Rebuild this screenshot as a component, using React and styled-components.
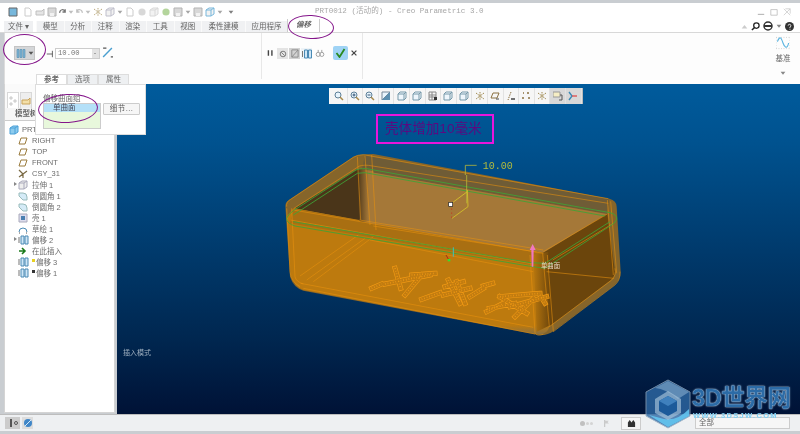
import React from "react"
import styled, { createGlobalStyle } from "styled-components"

const cjk = `"Liberation Sans", "Noto Sans CJK SC", sans-serif`

const GlobalStyle = createGlobalStyle`
html, body {
    margin: 0;
    width: 800px;
    height: 434px;
    overflow: hidden;
    background: #c9cdd1;
    font-family: ${cjk};
}
`

const Win = styled.div`
    position: relative;
    width: 800px;
    height: 434px;
    padding: 3px 0 3px 0;
    box-sizing: border-box;
    display: flex;
    flex-direction: column;
    background: #c9cdd1;
    overflow: hidden;
    filter: blur(0.3px);
`
const TitleBar = styled.div`
    height: 17px;
    padding: 0 4px;
    background: #fff;
    position: relative;
    display: flex;
    align-items: center;
`
const QuickIcon = styled.span`
    display: flex;
    width: ${p => p.$w || 12}px;
    height: 12px;
    align-items: center;
    justify-content: center;
    opacity: 0.75;
`
const Title = styled.div`
    position: absolute;
    left: 315px;
    top: 3px;
    font: 7.6px/11px "Liberation Mono", "Noto Sans CJK SC", monospace;
    color: #a8a8a8;
    white-space: pre;
`
const WinBtns = styled.div`
    margin-left: auto;
    display: flex;
    gap: 5px;
    padding-right: 5px;
`
const TabRow = styled.div`
    height: 13px;
    padding: 0 3px 0 4px;
    background: #fff;
    border-bottom: 1px solid #d8d8d8;
    box-sizing: border-box;
    display: flex;
    align-items: flex-end;
    position: relative;
`
const FileTab = styled.div`
    width: 29px;
    height: 11px;
    margin-right: 3px;
    background: #eff0f2;
    font-size: 7.5px;
    line-height: 11px;
    color: #666;
    text-align: center;
`
const Tab = styled.div`
    width: ${p => p.$w}px;
    height: ${p => (p.$on ? 13 : 11)}px;
    box-sizing: border-box;
    font-size: 7.5px;
    line-height: 11px;
    text-align: center;
    color: #666;
    background: ${p => (p.$on ? "#fff" : "#f0f1f3")};
    border-left: 1px solid ${p => (p.$on ? "#ccc" : "#fafafa")};
    border-right: ${p => (p.$on ? "1px solid #ccc" : "none")};
    font-weight: ${p => (p.$on ? "bold" : "normal")};
    font-style: ${p => (p.$on ? "italic" : "normal")};
`
const HelpBtns = styled.div`
    margin-left: auto;
    display: flex;
    align-items: center;
    gap: 3px;
    padding: 0 3px 1px 0;
`
const Ribbon = styled.div`
    height: 51px;
    margin-left: 4px;
    background: #fdfdfd;
    border-left: 1px solid #ddd;
    display: flex;
`
const Group = styled.div`
    width: ${p => p.$w}px;
    height: 46px;
    box-sizing: border-box;
    padding: ${p => p.$pad || "13px 0 0 9px"};
    border-right: 1px solid #e8e8e8;
    display: flex;
    align-items: flex-start;
    gap: ${p => p.$gap || 0}px;
`
const TypeButton = styled.div`
    width: 21px;
    height: 14px;
    background: #d4d6d8;
    border: 1px solid #c4c4c4;
    box-sizing: border-box;
    display: flex;
    align-items: center;
    justify-content: center;
    gap: 2px;
`
const DimMark = styled.span`
    width: 20px;
    height: 10px;
    margin-top: 3px;
    padding-right: 1px;
    box-sizing: border-box;
    display: flex;
    align-items: center;
    justify-content: flex-end;
`
const ValueBox = styled.div`
    width: 45px;
    height: 11px;
    margin-top: 2px;
    box-sizing: border-box;
    background: #fff;
    border: 1px solid #ccc;
    font: 7.2px/9px "Liberation Mono", monospace;
    color: #777;
    padding-left: 2px;
    position: relative;
`
const Spin = styled.span`
    position: absolute;
    right: 0;
    top: 0;
    width: 7px;
    height: 9px;
    background: #e3e3e3;
    &::after {
        content: "";
        position: absolute;
        left: 2px;
        top: 4px;
        border: 1.5px solid transparent;
        border-top-color: #666;
    }
`
const ToolIcon = styled.span`
    display: flex;
    align-items: center;
    justify-content: center;
    width: ${p => p.$w || 11}px;
    height: ${p => p.$h || 11}px;
    margin-top: ${p => p.$top ?? 2}px;
    background: ${p => p.$bg || "transparent"};
`
const OkButton = styled.div`
    width: 15px;
    height: 14px;
    margin-left: 6px;
    border-radius: 2px;
    background: #9fd3f5;
    display: flex;
    align-items: center;
    justify-content: center;
`
const DatumGroup = styled.div`
    margin-left: auto;
    width: 34px;
    height: 46px;
    padding-top: 3px;
    box-sizing: border-box;
    display: flex;
    flex-direction: column;
    align-items: center;
    font-size: 7.5px;
    line-height: 10px;
    color: #666;
`
const DatumLabel = styled.span`
    margin-top: ${p => p.$gap}px;
    display: flex;
`
const Main = styled.div`
    flex: 1;
    min-height: 0;
    display: flex;
    position: relative;
    background: #c9cdd1;
`
const Side = styled.div`
    width: 111px;
    margin-left: 4px;
    margin-right: 2px;
    margin-bottom: 1px;
    background: #fff;
    border: 1px solid #d4d4d4;
    border-top: none;
    box-sizing: border-box;
    display: flex;
    flex-direction: column;
`
const SideTabs = styled.div`
    height: 24px;
    padding: 8px 0 0 2px;
    background: #fafafa;
    box-sizing: border-box;
    display: flex;
    gap: 1px;
`
const SideTab = styled.div`
    width: 12px;
    height: 16px;
    border: 1px solid #d8d8d8;
    border-bottom: none;
    box-sizing: border-box;
    display: flex;
    align-items: center;
    justify-content: center;
    background: ${p => (p.$on ? "#fff" : "#eee")};
`
const TreeHead = styled.div`
    height: 12px;
    padding-left: 10px;
    background: #f6f6f6;
    border-bottom: 1px solid #ccc;
    font-size: 7.5px;
    font-weight: bold;
    line-height: 11px;
    color: #666;
`
const Tree = styled.div`
    padding-top: 3px;
    display: flex;
    flex-direction: column;
`
const TreeRow = styled.div`
    height: 11px;
    display: flex;
    align-items: center;
    padding-left: 9px;
    font-size: 7.5px;
    color: #6c6c6c;
    white-space: pre;
`
const Twist = styled.span`
    width: 5px;
    height: 7px;
    position: relative;
    &::after {
        content: "";
        display: ${p => (p.$show ? "block" : "none")};
        position: absolute;
        left: 0;
        top: 1px;
        border: 2.5px solid transparent;
        border-left: 3px solid #888;
    }
`
const TreeIcon = styled.span`
    width: 12px;
    height: 10px;
    margin-right: ${p => (p.$root ? 2 : 3)}px;
    margin-left: ${p => (p.$root ? -11 : -2)}px;
    display: flex;
    align-items: center;
    justify-content: center;
`
const TreeMark = styled.span`
    width: 3px;
    height: 3px;
    margin: 0 1px 2px 0;
    background: ${p => p.$c};
`
const Canvas = styled.div`
    flex: 1;
    position: relative;
    background: linear-gradient(180deg, #005b9c 0%, #00528f 18%, #00264f 78%, #001236 100%);
`
const ViewBar = styled.div`
    position: absolute;
    left: 212px;
    top: 4px;
    height: 16px;
    width: 254px;
    padding-left: 3px;
    box-sizing: border-box;
    display: flex;
    background: #f6f6f6;
    border-right: 1px solid #bbb;
`
const ViewBtn = styled.span`
    width: 15.6px;
    height: 16px;
    display: flex;
    align-items: center;
    justify-content: center;
    background: ${p => (p.$on ? "#d8d8d8" : "transparent")};
    border-right: 1px solid #e2e2e2;
    box-sizing: border-box;
`
const Note = styled.div`
    position: absolute;
    left: 259px;
    top: 30px;
    width: 118px;
    height: 30px;
    box-sizing: border-box;
    border: 2px solid #e815dc;
    padding-left: 7px;
    font-size: 13.6px;
    line-height: 25px;
    color: #5a0a80;
    white-space: nowrap;
`
const Mode = styled.div`
    position: absolute;
    left: 6px;
    bottom: 57px;
    font-size: 7px;
    color: #9fb0c0;
`
const ModelSvg = styled.svg`
    position: absolute;
    left: 153px;
    top: 56px;
    width: 360px;
    height: 210px;
`
const Status = styled.div`
    height: 17px;
    padding-left: 5px;
    background: #eef0f2;
    border-top: 1px solid #bdbdbd;
    box-sizing: border-box;
    display: flex;
    align-items: center;
    gap: 2px;
    position: relative;
`
const StatusRight = styled.div`
    margin-left: auto;
    display: flex;
    align-items: center;
    padding-right: 10px;
`
const DotTrack = styled.div`
    display: flex;
    gap: 1px;
    align-items: center;
    margin-right: 11px;
`
const Dot = styled.span`
    width: ${p => p.$s}px;
    height: ${p => p.$s}px;
    border-radius: 50%;
    background: ${p => p.$c};
`
const FindBtn = styled.div`
    width: 20px;
    height: 13px;
    margin: 0 54px 0 10px;
    background: #f6f6f6;
    border: 1px solid #ccc;
    box-sizing: border-box;
    display: flex;
    align-items: center;
    justify-content: center;
`
const FilterBox = styled.div`
    width: 95px;
    height: 12px;
    box-sizing: border-box;
    padding: 1px 0 0 3px;
    background: #f6f6f6;
    border: 1px solid #ccc;
    font-size: 7.5px;
    line-height: 8px;
    color: #666;
`
const Popup = styled.div`
    position: absolute;
    left: 35px;
    top: 74px;
    width: 111px;
`
const PopTabs = styled.div`
    height: 10px;
    padding-left: 1px;
    display: flex;
`
const PopTab = styled.div`
    width: 31px;
    height: 11px;
    box-sizing: border-box;
    background: ${p => (p.$on ? "#fff" : "#eef0f2")};
    border: 1px solid #ddd;
    border-bottom: none;
    font-size: 7.5px;
    line-height: 10px;
    text-align: center;
    color: #666;
    font-weight: ${p => (p.$on ? "bold" : "normal")};
    position: relative;
`
const PopBody = styled.div`
    height: 51px;
    box-sizing: border-box;
    padding: 12px 0 0 7px;
    background: #fff;
    border: 1px solid #ddd;
    display: flex;
    gap: 2px;
    position: relative;
`
const PopLabel = styled.div`
    position: absolute;
    left: 7px;
    top: 10px;
    font-size: 7.5px;
    line-height: 8px;
    color: #666;
`
const SurfList = styled.div`
    width: 58px;
    height: 26px;
    margin-top: 6px;
    box-sizing: border-box;
    background: #e8f8dc;
    border: 1px solid #ccc;
`
const SurfItem = styled.div`
    height: 8px;
    background: #b4e0f8;
    padding-left: 9px;
    font-size: 7.5px;
    line-height: 8px;
    color: #445;
`
const DetailBtn = styled.div`
    width: 37px;
    height: 12px;
    margin-top: 6px;
    box-sizing: border-box;
    background: #f6f6f6;
    border: 1px solid #ccc;
    border-radius: 1px;
    font-size: 7.5px;
    line-height: 10px;
    letter-spacing: 0.4px;
    text-align: center;
    color: #555;
`
const Ring = styled.div`
    position: absolute;
    left: ${p => p.$x}px;
    top: ${p => p.$y}px;
    width: ${p => p.$w}px;
    height: ${p => p.$h}px;
    box-sizing: border-box;
    border: 1.5px solid #84148a;
    border-radius: 50%;
    transform: rotate(${p => p.$r || 0}deg);
    pointer-events: none;
`
const Mark = styled.div`
    position: absolute;
    left: 644px;
    top: 379px;
    width: 156px;
    height: 50px;
    pointer-events: none;
`
const MarkHex = styled.svg`
    position: absolute;
    left: 0;
    top: 0;
    width: 48px;
    height: 50px;
`
const MarkName = styled.div`
    position: absolute;
    left: 48px;
    top: 6px;
    font: bold 23.5px/27px ${cjk};
    color: #2c6ba6;
    letter-spacing: -0.4px;
    white-space: nowrap;
    text-shadow: 0 0 1px #cfe4f5, 0 0 2px #a8c8e4;
`
const MarkUrl = styled.div`
    position: absolute;
    left: 49px;
    top: 34px;
    font: bold 7.5px/6px "Liberation Sans", sans-serif;
    color: #7fd0f5;
    letter-spacing: 1.3px;
    white-space: nowrap;
`

/* little drawings */
const Svg = ({ w = 10, h = 10, children }) => (
    <svg width={w} height={h} viewBox="0 0 10 10" fill="none">{children}</svg>
)
const Sheet = () => <Svg><path d="M2 1h4l2 2v6H2z" fill="#fff" stroke="#bbb" /></Svg>
const Folder = ({ c = "#ddd", s = "#aaa" }) => <Svg><path d="M1 4h6l2-2v6H1z" fill={c} stroke={s} /></Svg>
const Disk = () => <Svg><path d="M1 1h8v8H1z" fill="#ccc" stroke="#999" /><path d="M3 6h4v3H3z" fill="#eee" /></Svg>
const Arrow = ({ c = "#444", flip }) => (
    <Svg><path d={flip ? "M8 6a3 3 0 0 0-6-1M2 2v3h3" : "M2 6a3 3 0 0 1 6-1M8 2v3H5"} stroke={c} strokeWidth="1.4" /></Svg>
)
const Caret = ({ c = "#888" }) => <Svg w={6} h={6}><path d="M1 3h8L5 8z" fill={c} /></Svg>
const Dots = ({ c = "#aaa" }) => <Svg><path d="M2 1h2v2H2zM2 7h2v2H2zM6 4h2v2H6z" stroke={c} strokeWidth=".6" /></Svg>
const Ball = ({ c }) => <Svg><circle cx="5" cy="5" r="3.6" fill={c} /></Svg>
const Cube = ({ c = "#aab" }) => <Svg><path d="M1 3l3-2h5v6l-3 2H1z" fill="#eee" stroke={c} /><path d="M1 3h5v6M6 3l3-2" stroke={c} /></Svg>
const RootCube = () => <Svg><path d="M1 3l3-2h5v6l-3 2H1z" fill="#8ccbee" stroke="#4aa0d8" /><path d="M1 3h5v6M6 3l3-2" stroke="#4aa0d8" /></Svg>
const Offset = ({ c = "#4a8ab5" }) => (
    <Svg w={12} h={10}><path d="M3 1h3v8H3zM7 1h3v8H7z" fill="#cfe6f6" stroke={c} /><path d="M1 2v6" stroke="#777" /></Svg>
)
const Plane = () => <Svg><path d="M3 2h6L7 8H1z" stroke="#9a7b3c" fill="#fff" /></Svg>
const Csys = () => <Svg><path d="M5 5L1 1M5 5l4-3M5 5v4M5 5L1 8" stroke="#7a6a44" strokeWidth="1.2" /></Svg>
const Round = () => <Svg><path d="M1 2h4a4 4 0 0 1 4 4v3H5L1 5z" fill="#d5ebf7" stroke="#9bb" /></Svg>
const Shell = () => <Svg><path d="M1 1h8v8H1z" fill="#dde" stroke="#aab" /><path d="M3 3h4v4H3z" fill="#4a7fb0" /></Svg>
const Sketch = () => <Svg><path d="M1 8a4 4 0 0 1 8 0" stroke="#4a8ab5" /><path d="M1 9h1M8 9h1" stroke="#555" /></Svg>
const Insert = () => <Svg><path d="M1 5h5M4 2l3 3-3 3" stroke="#1a7a1a" strokeWidth="1.6" /></Svg>
const Lens = ({ mode }) => (
    <Svg>
        <circle cx="4" cy="4" r="3" fill="#e8f4fc" stroke="#5c7f98" />
        <path d="M6 6l3 3" stroke="#a88a4c" strokeWidth="1.5" />
        {mode && <path d={mode === "in" ? "M2.5 4h3M4 2.5v3" : "M2.5 4h3"} stroke="#357" />}
    </Svg>
)
const Tilt = () => <Svg><path d="M1 9V1h8z" fill="#e8f4fc" stroke="#789" /><path d="M9 1v8H1z" fill="#5b8fb0" /></Svg>
const Box3 = () => <Svg><path d="M1 3h6v6H1zM1 3l2-2h6L7 3M9 1v6L7 9" fill="#eef6fc" stroke="#79a" /></Svg>
const Grid = () => <Svg><path d="M1 1h7v8H1zM1 4h7M1 6h7M4 1v8" stroke="#888" /><path d="M6 6h3v3H6z" fill="#333" /></Svg>
const Star = () => <Svg><path d="M5 1v8M1 2l8 6M9 2L1 8" stroke="#a08a50" strokeDasharray="1.4 .7" /></Svg>
const Para = () => <Svg><path d="M3 2h6L7 7H1z" stroke="#8a7040" /><path d="M6 8h3" stroke="#444" /></Svg>
const Slash = () => <Svg><path d="M5 1L2 9" stroke="#8a7040" strokeDasharray="1.5 1" /><path d="M5 8h4" stroke="#444" strokeWidth="1.5" /></Svg>
const Pts = () => <Svg><path d="M1 7h2M6 2h2M2 2h1M7 7h2" stroke="#8a7040" strokeWidth="1.4" /></Svg>
const Note3 = () => <Svg><path d="M0 1h7v5H0z" fill="#f5edc4" stroke="#999" /><path d="M7 4h2v5H6" stroke="#555" /></Svg>
const Link = () => <Svg><path d="M1 1l3 4-3 4" stroke="#3a8ab5" strokeWidth="1.4" /><path d="M4 5h5" stroke="#d55" strokeWidth="1.4" /></Svg>

const tabs = [
    ["模型", 27.5], ["分析", 27.5], ["注释", 27.5], ["渲染", 27.5], ["工具", 27.5],
    ["视图", 27.5], ["柔性建模", 44], ["应用程序", 42],
]

const treeRows = [
    { t: "PRT", I: RootCube, root: true },
    { t: "RIGHT", I: Plane },
    { t: "TOP", I: Plane },
    { t: "FRONT", I: Plane },
    { t: "CSY_31", I: Csys },
    { t: "拉伸 1", I: Cube, open: true },
    { t: "倒圆角 1", I: Round },
    { t: "倒圆角 2", I: Round },
    { t: "壳 1", I: Shell },
    { t: "草绘 1", I: Sketch },
    { t: "偏移 2", I: Offset, open: true },
    { t: "在此插入", I: Insert },
    { t: "偏移 3", I: Offset, pre: "#e8d020" },
    { t: "偏移 1", I: Offset, pre: "#333" },
]

const viewIcons = [
    () => <Lens />, () => <Lens mode="in" />, () => <Lens mode="out" />, Tilt, Box3, Box3, Grid, Box3, Box3,
    Star, Para, Slash, Pts, Star, Note3, Link,
]

// all model coordinates are 3x page pixels, counted from (270,140)
const wire = [
    "M50 200Q48 185 62 178L250 52Q262 44 280 44L1015 176",
    "M72 205L262 82Q270 74 295 76L1015 190",
    "M262 50L272 240M285 48L300 255M305 45L318 270",
    "M50 205L60 395Q62 425 90 440M65 205L75 410Q78 425 100 432",
    "M70 210L820 340M62 240L790 372",
    "M268 240L820 330M310 258L800 336",
    "M92 430L790 562M100 445L795 582",
    "M90 408L265 285M110 420L285 295M130 425L310 290",
    "M780 345L795 578Q800 590 820 583M818 340L838 560M832 345L850 575",
    "M820 335L1012 222M848 360L1030 250",
    "M838 560L1025 420Q1040 405 1035 385M850 575L1035 435Q1052 420 1050 395",
    "M1012 180L1030 405M1022 184L1040 400",
    "M830 395L1032 415M300 300L790 395",
]
const green = "M50 235Q52 225 70 212L255 92Q265 85 290 86L1020 218Q1042 224 1040 238Q1036 250 1020 258L825 385L775 378L75 258Q50 250 50 235ZM70 225L262 100L285 98L1005 228M70 245L780 368L825 370L1020 245"

// bars of the raised lettering on the box floor
const bars = [
    [305, 445, 335, 432], [345, 432, 480, 405], [375, 385, 392, 445], [405, 465, 455, 405], [425, 405, 495, 400],
    [400, 420, 440, 412], [455, 478, 510, 458], [525, 440, 580, 425], [535, 420, 570, 490], [560, 425, 585, 490],
    [600, 470, 640, 445], [640, 438, 668, 430], [520, 465, 600, 445], [658, 505, 735, 490], [690, 470, 810, 460],
    [735, 530, 790, 475], [690, 470, 770, 520], [720, 500, 830, 470], [650, 515, 700, 490], [810, 465, 825, 490],
]

function Lettering() {
    const d = bars.map(([a, b, c, e]) => `M${a} ${b}L${c} ${e}`).join("")
    return (
        <g fill="none" strokeLinecap="square">
            <path d={d} stroke="#f29a14" strokeWidth="15" />
            <path d={d} stroke="#c27c10" strokeWidth="11" />
            <path d={d} stroke="#f29a14" strokeWidth="5" strokeDasharray="2 6" strokeLinecap="butt" />
        </g>
    )
}

function Model() {
    return (
        <ModelSvg viewBox="0 0 1080 630">
            <defs>
                <linearGradient id="col" x1="0" x2="1" y1="0" y2="0">
                    <stop offset="0" stopColor="#4a3519" />
                    <stop offset="0.6" stopColor="#a57838" />
                    <stop offset="1" stopColor="#a57838" />
                </linearGradient>
                <linearGradient id="edge" x1="0" x2="1" y1="0" y2="0">
                    <stop offset="0" stopColor="#b8770e" />
                    <stop offset="1" stopColor="#6b450c" />
                </linearGradient>
                <linearGradient id="rim" x1="0" x2="0" y1="0" y2="1">
                    <stop offset="0" stopColor="#bd7a0e" />
                    <stop offset="0.93" stopColor="#bd7a0e" />
                    <stop offset="1" stopColor="#8a7040" />
                </linearGradient>
            </defs>
            <path d="M46 198Q46 186 60 178L250 50Q265 42 310 42L1018 176Q1040 182 1040 200L1052 395Q1052 420 1030 438L852 572Q825 592 790 582L100 452Q70 442 60 410Z" fill="#86652a" />
            <path d="M75 205L262 88L300 90L318 270L262 240Z" fill="#4a3519" />
            <path d="M70 205L820 338L838 560Q830 590 790 580L100 450Q72 440 62 405L50 230Z" fill="url(#rim)" />
            <path d="M285 46L1018 178L1010 222L275 92Z" fill="#6f5c36" />
            <path d="M280 92L1010 222L820 338L318 258L300 100Z" fill="#a57838" />
            <path d="M262 88L310 92L318 270L285 285L268 240Z" fill="url(#col)" />
            <path d="M70 205L300 250L820 338L800 378L60 250Z" fill="#a96f12" />
            <path d="M820 338L1012 222L1035 395Q1035 410 1020 422L840 558Z" fill="#6b450c" />
            <path d="M790 345L835 335L842 555L800 575Z" fill="url(#edge)" />
            <path d={wire.join("")} fill="none" stroke="#e8920f" strokeWidth="2" opacity=".85" />
            <path d={green} fill="none" stroke="#3fa336" strokeWidth="2.6" />
            <Lettering />
            <path d="M620 76H586V105M590 105V190" stroke="#b8b838" strokeWidth="2.4" fill="none" />
            <path d="M592 150L594 200L546 235M592 155L542 192" stroke="#d8c828" strokeWidth="2.4" fill="none" />
            <path d="M545 205V236" stroke="#c04020" strokeWidth="2.4" strokeDasharray="5 7" />
            <rect x="536" y="187" width="12" height="12" fill="#fff" stroke="#222" strokeWidth="2" />
            <text x="638" y="86" fontFamily="Liberation Mono, monospace" fontSize="30" fill="#b4bc3c">10.00</text>
            <path d="M788 312l9 18h-6l-1 50h-5l-1-50h-5z" fill="#f078c0" />
            <text x="813" y="385" fontFamily={cjk} fontSize="19" fill="#e8dcc8">单曲面</text>
            <path d="M550 322v28" stroke="#40c0c0" strokeWidth="3" />
            <path d="M528 345l8 14" stroke="#b02818" strokeWidth="3" />
            <rect x="533" y="357" width="8" height="7" fill="#30e030" />
        </ModelSvg>
    )
}

export default function App() {
    return (
        <>
            <GlobalStyle />
            <Win>
                <TitleBar>
                    <QuickIcon $w={18}><Svg><path d="M1 1h8v8H1z" fill="#4a9fd0" stroke="#333" /></Svg></QuickIcon>
                    <QuickIcon><Sheet /></QuickIcon>
                    <QuickIcon><Folder /></QuickIcon>
                    <QuickIcon><Disk /></QuickIcon>
                    <QuickIcon $w={9}><Arrow /></QuickIcon>
                    <QuickIcon $w={8}><Caret c="#aaa" /></QuickIcon>
                    <QuickIcon $w={9}><Arrow c="#aaa" flip /></QuickIcon>
                    <QuickIcon $w={8}><Caret c="#aaa" /></QuickIcon>
                    <QuickIcon><Star /></QuickIcon>
                    <QuickIcon><Cube /></QuickIcon>
                    <QuickIcon $w={8}><Caret /></QuickIcon>
                    <QuickIcon><Sheet /></QuickIcon>
                    <QuickIcon><Ball c="#ccc" /></QuickIcon>
                    <QuickIcon><Cube c="#ccc" /></QuickIcon>
                    <QuickIcon><Ball c="#9cc77c" /></QuickIcon>
                    <QuickIcon><Disk /></QuickIcon>
                    <QuickIcon $w={8}><Caret /></QuickIcon>
                    <QuickIcon><Disk /></QuickIcon>
                    <QuickIcon><Cube c="#4a9fd0" /></QuickIcon>
                    <QuickIcon $w={8}><Caret /></QuickIcon>
                    <QuickIcon $w={14}><Caret c="#555" /></QuickIcon>
                    <Title>PRT0012 (活动的) - Creo Parametric 3.0</Title>
                    <WinBtns>
                        <Svg w={8} h={8}><path d="M1 8h8" stroke="#bbb" strokeWidth="1.5" /></Svg>
                        <Svg w={8} h={8}><path d="M1 2h8v7H1z" stroke="#bbb" /></Svg>
                        <Svg w={8} h={8}><path d="M1 1l8 8M9 1L1 9M3 1h6v6" stroke="#ccc" /></Svg>
                    </WinBtns>
                </TitleBar>
                <TabRow>
                    <FileTab>文件 ▾</FileTab>
                    {tabs.map(([t, w]) => <Tab key={t} $w={w}>{t}</Tab>)}
                    <Tab $w={33} $on>偏移</Tab>
                    <HelpBtns>
                        <Svg w={7} h={7}><path d="M1 8l4-5 4 5z" fill="#ccc" /></Svg>
                        <Svg w={9} h={9}><circle cx="6" cy="4" r="3" stroke="#222" strokeWidth="1.4" /><path d="M4 6L1 9" stroke="#222" strokeWidth="1.6" /></Svg>
                        <Svg w={10} h={10}><circle cx="5" cy="5" r="4" stroke="#333" strokeWidth="1.5" /><path d="M1 5h8" stroke="#333" strokeWidth="2" /></Svg>
                        <Caret />
                        <Svg w={9} h={9}><circle cx="5" cy="5" r="5" fill="#333" /><path d="M3.5 4a1.5 1.5 0 1 1 2 1.5V6.500M5.500 7.500v1" stroke="#fff" /></Svg>
                    </HelpBtns>
                </TabRow>
                <Ribbon>
                    <Group $w={257}>
                        <TypeButton>
                            <Svg w={10} h={11}><path d="M1 1h2v8H1zM4 1h2v8H4zM7 1h2v8H7z" fill="#7fb6d6" stroke="#4f8aad" strokeWidth=".6" /></Svg>
                            <Caret c="#555" />
                        </TypeButton>
                        <DimMark>
                            <Svg w={8} h={8}><path d="M1 5h7M8 1v8" stroke="#444" /></Svg>
                        </DimMark>
                        <ValueBox>10.00<Spin /></ValueBox>
                        <ToolIcon $w={15} $h={13} $top={0}>
                            <Svg w={11} h={11}><path d="M1 9l8-8" stroke="#4a9fd0" strokeWidth="1.3" /><path d="M1 1h3M8 9h2" stroke="#555" strokeWidth="1.3" /></Svg>
                        </ToolIcon>
                    </Group>
                    <Group $w={101} $pad="13px 0 0 3px" $gap={1}>
                        <ToolIcon $w={11} $h={12} $top={1}><Svg w={7} h={8}><path d="M2 1v8M7 1v8" stroke="#444" strokeWidth="2" /></Svg></ToolIcon>
                        <ToolIcon $bg="#e4e4e4"><Svg w={8} h={8}><circle cx="5" cy="5" r="3.5" stroke="#666" /><path d="M3 3l4 4" stroke="#666" /></Svg></ToolIcon>
                        <ToolIcon $bg="#d2d2d2"><Svg w={9} h={9}><path d="M2 1h7v8H2zM2 9l7-8" stroke="#888" /></Svg></ToolIcon>
                        <ToolIcon $bg="#eef4f8"><Offset /></ToolIcon>
                        <ToolIcon $w={13}><Svg w={12} h={9}><circle cx="3" cy="6" r="2.3" stroke="#999" /><circle cx="7" cy="6" r="2.3" stroke="#999" /><path d="M3 4V1M7 4V1" stroke="#999" /></Svg></ToolIcon>
                        <OkButton><Svg w={11} h={10}><path d="M1 5l3 4 5-8" stroke="#2a8a20" strokeWidth="1.8" /></Svg></OkButton>
                        <ToolIcon $w={9} $h={12} $top={1}><Svg w={6} h={6}><path d="M1 1l8 8M9 1L1 9" stroke="#444" strokeWidth="2" /></Svg></ToolIcon>
                    </Group>
                    <DatumGroup>
                        <Svg w={14} h={14}>
                            <path d="M0 1h10M0 9h10M0 1v8M10 1v8" stroke="#bbb" strokeWidth=".5" strokeDasharray=".6 1.2" />
                            <path d="M1 4c2-5 3-2 4 1s3 5 4 0" stroke="#5ab4e0" strokeWidth=".8" />
                        </Svg>
                        <DatumLabel $gap={4}>基准</DatumLabel>
                        <DatumLabel $gap={6}><Caret /></DatumLabel>
                    </DatumGroup>
                </Ribbon>
                <Main>
                    <Side>
                        <SideTabs>
                            <SideTab $on><Dots /></SideTab>
                            <SideTab><Folder c="#f3dfa8" s="#c9a35a" /></SideTab>
                        </SideTabs>
                        <TreeHead>模型树</TreeHead>
                        <Tree>
                            {treeRows.map(r => (
                                <TreeRow key={r.t}>
                                    <Twist $show={r.open} />
                                    <TreeIcon $root={r.root}><r.I /></TreeIcon>
                                    {r.pre && <TreeMark $c={r.pre} />}
                                    {r.t}
                                </TreeRow>
                            ))}
                        </Tree>
                    </Side>
                    <Canvas>
                        <ViewBar>
                            {viewIcons.map((I, i) => (
                                <ViewBtn key={i} $on={i >= 14}><I /></ViewBtn>
                            ))}
                        </ViewBar>
                        <Note>壳体增加10毫米</Note>
                        <Model />
                        <Mode>插入模式</Mode>
                    </Canvas>
                </Main>
                <Status>
                    <ToolIcon $w={15} $h={12} $top={0} $bg="#ccc"><Svg w={10} h={10}><path d="M3 1v8" stroke="#555" strokeWidth="2" /><circle cx="8" cy="5" r="1.500" stroke="#555" /></Svg></ToolIcon>
                    <ToolIcon $w={11} $h={12} $top={0} $bg="#ddd"><Svg><circle cx="5" cy="5" r="4" fill="#3f86c8" /><path d="M2 8l6-6" stroke="#d8eaf8" /></Svg></ToolIcon>
                    <StatusRight>
                        <DotTrack>
                            <Dot $s={5} $c="#c0c0c0" />
                            <Dot $s={3} $c="#d4d4d4" />
                            <Dot $s={3} $c="#d4d4d4" />
                        </DotTrack>
                        <Svg w={7} h={9}><path d="M1 0v10" stroke="#aaa" /><path d="M1 1h6L5 3l2 2H1z" fill="#ccc" /></Svg>
                        <FindBtn><Svg w={9} h={9}><path d="M1 9V4l2-3 2 3 2-3 2 3v5z" fill="#333" /></Svg></FindBtn>
                        <FilterBox>全部</FilterBox>
                    </StatusRight>
                </Status>
                <Popup>
                    <PopTabs>
                        <PopTab $on>参考</PopTab>
                        <PopTab>选项</PopTab>
                        <PopTab>属性</PopTab>
                    </PopTabs>
                    <PopBody>
                        <PopLabel>偏移曲面组</PopLabel>
                        <SurfList><SurfItem>单曲面</SurfItem></SurfList>
                        <DetailBtn>细节...</DetailBtn>
                    </PopBody>
                </Popup>
                <Ring $x={288} $y={15} $w={46} $h={24} $r={3} />
                <Ring $x={3} $y={34} $w={43} $h={31} />
                <Ring $x={38} $y={94} $w={60} $h={29} $r={-3} />
                <Mark>
                    <MarkHex viewBox="0 0 48 50">
                        <path d="M24 1L46 13V37L24 49L2 37V13Z" fill="#2f6aa6" opacity=".8" stroke="#8fa8c0" />
                        <path d="M24 2L45 13L34 20Q22 10 11 9Z" fill="#8fb4d4" opacity=".55" />
                        <path d="M5 36L24 48L45 37V30Q34 42 20 40Z" fill="#63c4ee" opacity=".9" />
                        <path d="M24 12L37 20V34L24 41L11 34V20Z" fill="#a8c4dc" opacity=".65" />
                        <path d="M24 17L33 22V32L24 37L15 32V22Z" fill="#1c5a9a" />
                        <path d="M24 17L33 22L24 27L15 22Z" fill="#3f80bd" />
                    </MarkHex>
                    <MarkName>3D世界网</MarkName>
                    <MarkUrl>WWW.3DSJW.COM</MarkUrl>
                </Mark>
            </Win>
        </>
    )
}
